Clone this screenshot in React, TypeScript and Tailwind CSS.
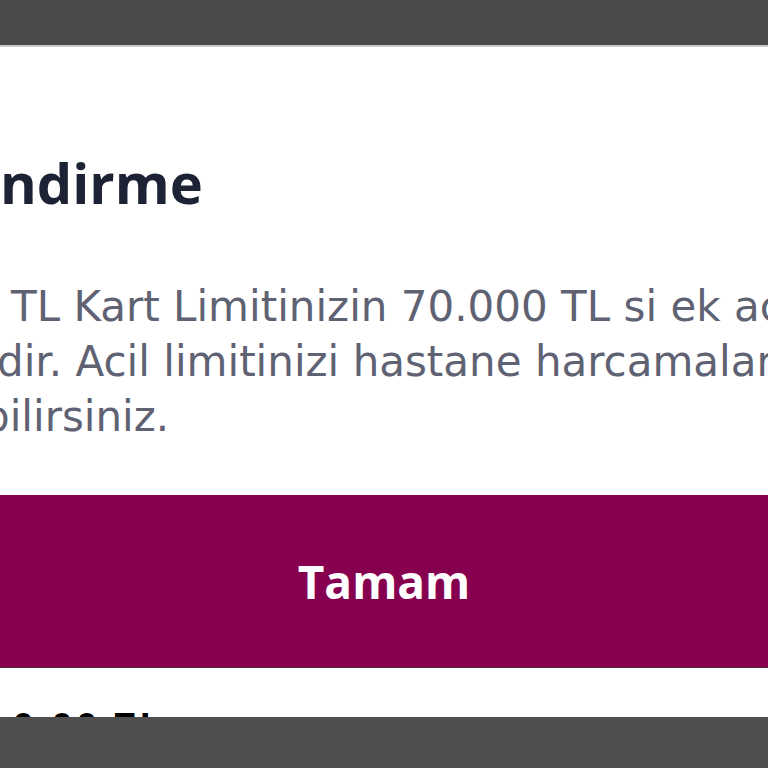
import React from "react";

function ClippedLine({
  hidden,
  visible,
  offset,
  className,
}: {
  hidden: string;
  visible: string;
  offset: string;
  className?: string;
}) {
  // hidden part sits left of the viewport, clipped by the page edge
  return (
    <div className={`flex whitespace-nowrap ${className ?? ""}`}>
      <div className={`flex justify-end shrink-0 ${offset}`}>
        <span className="shrink-0">{hidden}</span>
      </div>
      <span className="shrink-0">{visible}</span>
    </div>
  );
}

export default function App() {
  return (
    <div className="w-[768px] h-[768px] overflow-hidden flex flex-col bg-white font-['Open_Sans',sans-serif]">
      <div className="h-[45px] shrink-0 bg-[#4a4a4a]" />
      <div className="h-[2px] shrink-0 bg-[#c9c9c9]" />

      <div className="flex flex-col shrink-0">
        <ClippedLine
          hidden="Bilgile"
          visible="ndirme"
          offset="w-[0px]"
          className="mt-[103px] text-[56px] leading-[64px] font-bold text-[#1e2235]"
        />

        <div className="mt-[65px] text-[42px] leading-[55px] text-[#5f6272] font-['DejaVu_Sans',sans-serif]">
          <ClippedLine
            hidden={"100.000\u00a0"}
            visible="TL Kart Limitinizin 70.000 TL si ek acil"
            offset="w-[11px]"
          />
          <ClippedLine
            hidden="limitiniz"
            visible="dir. Acil limitinizi hastane harcamalarında"
            offset="w-[0px] -mr-[3px]"
          />
          <ClippedLine
            hidden="kullana"
            visible="bilirsiniz."
            offset="w-[0px] -mr-[17px]"
          />
        </div>

        <button
          type="button"
          className="mt-[51px] h-[172px] w-full bg-[#870050] text-white text-[46px] font-bold flex items-center justify-center"
        >
          Tamam
        </button>
        <div className="h-px bg-[#4a2a3e]" />
      </div>

      <div className="relative flex-1">
        <div className="pt-[38px] pl-[13px] whitespace-nowrap text-[36px] leading-[40px] font-bold tracking-[4px] text-black">
          0,00 TL
        </div>
        <div className="absolute left-0 right-0 top-[49px] bottom-0 bg-[#4f4f4f]" />
      </div>
    </div>
  );
}
